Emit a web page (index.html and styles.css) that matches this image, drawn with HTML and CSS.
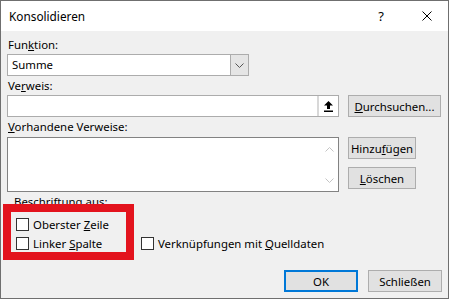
FILE: index.html
```html
<!DOCTYPE html>
<html lang="de">
<head>
    <meta charset="UTF-8">
    <title>Konsolidieren</title>
    <link rel="stylesheet" href="styles.css">
</head>
<body>

<div class="dialog">
    <div class="titlebar">
        <span class="title">Konsolidieren</span>
        <span class="help">?</span>
        <svg class="close" width="10" height="10" viewBox="0 0 10 10">
            <path d="M0.5 0.5L9.5 9.5M9.5 0.5L0.5 9.5" stroke="#000" stroke-width="1" fill="none"/>
        </svg>
    </div>

    <div class="content">
        <div class="label first">Fun<u>k</u>tion:</div>
        <div class="select">
            <span class="select-text">Summe</span>
            <span class="drop">
                <svg width="9" height="5" viewBox="0 0 9 5">
                    <path d="M0.5 0.5L4.5 4.5L8.5 0.5" stroke="#555" fill="none"/>
                </svg>
            </span>
        </div>

        <div class="label second">Ve<u>r</u>weis:</div>
        <div class="row">
            <div class="ref-input">
                <span class="collapse">
                    <svg width="9" height="11" viewBox="0 0 9 11">
                        <path d="M4.5 0L9 4.5H6V8H3V4.5H0Z" fill="#000"/>
                        <rect x="0" y="9.5" width="9" height="1.5" fill="#000"/>
                    </svg>
                </span>
            </div>
            <button class="btn wide"><u>D</u>urchsuchen...</button>
        </div>

        <div class="label third"><u>V</u>orhandene Verweise:</div>
        <div class="row">
            <div class="list">
                <div class="scroll">
                    <svg width="9" height="5" viewBox="0 0 9 5">
                        <path d="M0.5 4.5L4.5 0.5L8.5 4.5" stroke="#c4c4c4" fill="none"/>
                    </svg>
                    <svg width="9" height="5" viewBox="0 0 9 5">
                        <path d="M0.5 0.5L4.5 4.5L8.5 0.5" stroke="#c4c4c4" fill="none"/>
                    </svg>
                </div>
            </div>
            <div class="side-buttons">
                <button class="btn">Hinzu<u>f</u>ügen</button>
                <button class="btn"><u>L</u>öschen</button>
            </div>
        </div>

        <div class="label group">Beschriftung aus:</div>
        <div class="checks">
            <label class="check"><span class="box"></span><span>Oberster <u>Z</u>eile</span></label>
            <span></span>
            <label class="check"><span class="box"></span><span>Linker <u>S</u>palte</span></label>
            <label class="check"><span class="box"></span><span>Verknüpfungen mit <u>Q</u>uelldaten</span></label>
        </div>

        <div class="footer">
            <button class="btn default">OK</button>
            <button class="btn">Schließen</button>
        </div>
    </div>

    <div class="highlight"></div>
</div>

</body>
</html>
```

FILE: styles.css
```css
body {
    margin: 0;
    font-family: "Noto Sans", "Open Sans", sans-serif;
    font-size: 11.4px;
    color: #000;
}
.dialog {
    position: relative;
    box-sizing: border-box;
    width: 449px;
    height: 299px;
    border: 1px solid #6f6f6f;
    background-color: #f0f0f0;
}
.titlebar {
    display: flex;
    align-items: center;
    height: 30px;
    background-color: #fff;
}
.title {
    margin-left: 8px;
    flex: 1;
    font-size: 11.8px;
}
.help {
    font-size: 13px;
    margin-right: 38px;
}
.close {
    margin-right: 16px;
}
.content {
    padding: 0 6px;
}
.label {
    line-height: 18px;
    padding-left: 1px;
}
.label.first {
    margin-top: 5px;
}
.label.second {
    line-height: 19px;
}
.label.third {
    line-height: 20px;
}
.label.group {
    margin-top: 1px;
    padding-left: 7px;
}
.select {
    display: flex;
    box-sizing: border-box;
    width: 242px;
    height: 22px;
    border: 1px solid #acacac;
    background-color: #fff;
}
.select-text {
    flex: 1;
    padding-left: 4px;
    line-height: 20px;
}
.drop {
    display: flex;
    align-items: center;
    justify-content: center;
    width: 17px;
    background-color: #e5e5e5;
    border-left: 1px solid #acacac;
}
.row {
    display: flex;
    gap: 9px;
    align-items: flex-start;
}
.ref-input {
    display: flex;
    justify-content: flex-end;
    box-sizing: border-box;
    width: 332px;
    height: 22px;
    border: 1px solid #acacac;
    background-color: #fff;
}
.collapse {
    display: flex;
    align-items: center;
    justify-content: center;
    width: 19px;
    border-left: 2px solid #d8d8d8;
    padding-top: 1px;
}
.list {
    display: flex;
    justify-content: flex-end;
    box-sizing: border-box;
    width: 332px;
    height: 55px;
    border: 1px solid #828282;
    background-color: #fff;
}
.scroll {
    display: flex;
    flex-direction: column;
    justify-content: space-between;
    align-items: center;
    width: 17px;
    padding: 9px 0 8px;
}
.side-buttons {
    display: flex;
    flex-direction: column;
    gap: 8px;
}
.btn {
    box-sizing: border-box;
    width: 68px;
    height: 22px;
    padding: 0;
    font-family: inherit;
    font-size: 11.4px;
    color: #000;
    background-color: #e1e1e1;
    border: 1px solid #adadad;
    white-space: nowrap;
}
.btn.wide {
    width: 93px;
}
.btn.default {
    width: 74px;
    border: 2px solid #0078d7;
}
.checks {
    display: grid;
    grid-template-columns: 125px auto;
    row-gap: 6px;
    margin-top: 7px;
    margin-left: 9px;
}
.check {
    display: flex;
    align-items: center;
    gap: 4px;
    height: 13px;
}
.box {
    box-sizing: border-box;
    width: 13px;
    height: 13px;
    border: 1px solid #333;
    background-color: #fff;
}
.footer {
    display: flex;
    justify-content: flex-end;
    gap: 10px;
    margin-top: 20px;
}
.footer .btn {
    width: 74px;
}
.highlight {
    position: absolute;
    left: 2px;
    top: 203px;
    box-sizing: border-box;
    width: 131px;
    height: 56px;
    border: 8px solid #e3131d;
}
```
